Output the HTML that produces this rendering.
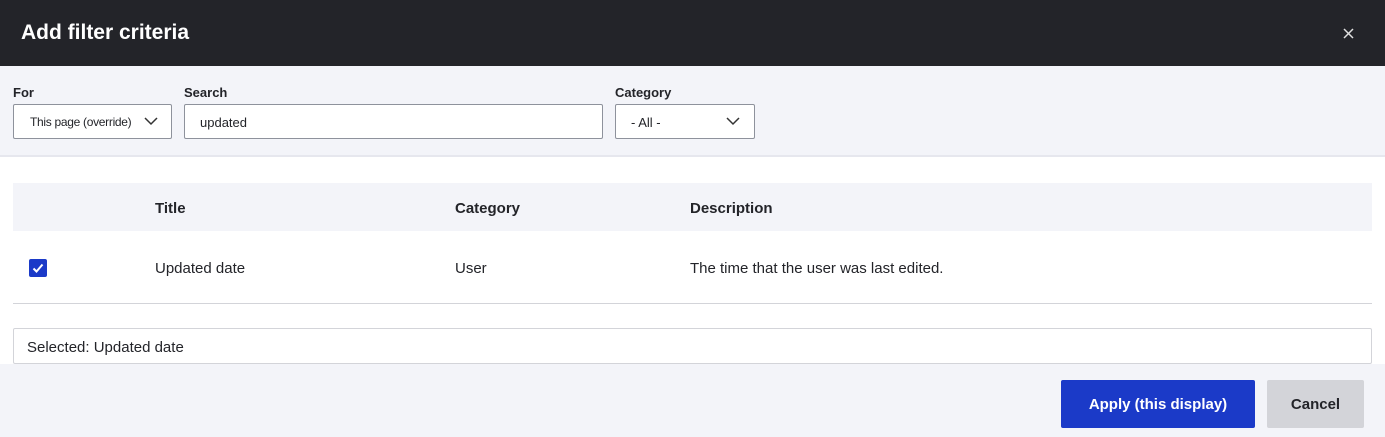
<!DOCTYPE html>
<html><head><style>
*{box-sizing:border-box;margin:0;padding:0}
body{width:1385px;height:437px;overflow:hidden;font-family:"Liberation Sans",sans-serif;color:#232429;background:#fff;position:relative}
.hdr{position:absolute;left:0;top:0;width:1385px;height:66px;background:#232429}
.hdr h1{position:absolute;left:21px;top:21px;font-size:21px;font-weight:bold;color:#fff}
.x{position:absolute;left:1343px;top:28px}
.filt{position:absolute;left:0;top:66px;width:1385px;height:91px;background:#f3f4f9;border-bottom:2px solid #e6e7ee}
.lbl{position:absolute;top:19px;font-size:13px;font-weight:bold}
.inp{position:absolute;top:38px;height:35px;background:#fff;border:1px solid #8e929c;border-radius:2px;font-size:13px;padding:10px 0 0 15px}
.inp svg{position:absolute;top:12px}
.th{position:absolute;left:13px;top:183px;width:1359px;height:48px;background:#f3f4f9;font-size:15px;font-weight:bold}
.th span,.tr span{position:absolute;top:17px}
.tr{position:absolute;left:13px;top:231px;width:1359px;height:73px;border-bottom:1px solid #d3d4d9;font-size:15px}
.tr span{top:29px}
.cb{position:absolute;left:16px;top:28px;width:18px;height:18px;background:#1b3ac8;border-radius:2px}
.sel{position:absolute;left:13px;top:328px;width:1359px;height:36px;border:1px solid #d3d4d9;border-radius:2px;font-size:15px;padding:10px 0 0 13px;background:#fff}
.foot{position:absolute;left:0;top:364px;width:1385px;height:73px;background:#f3f4f9}
.btn{position:absolute;top:16px;height:48px;border-radius:2px;font-size:15px;font-weight:bold;text-align:center;line-height:50px}
</style></head><body>
<div class="hdr"><h1>Add filter criteria</h1>
<svg class="x" width="11" height="11" viewBox="0 0 11 11"><path d="M1 1L10 10M10 1L1 10" stroke="#e0e0e0" stroke-width="1.5"/></svg></div>
<div class="filt">
<div class="lbl" style="left:13px">For</div>
<div class="lbl" style="left:184px">Search</div>
<div class="lbl" style="left:615px">Category</div>
<div class="inp" style="left:13px;width:159px;font-size:12px;padding-left:16px;letter-spacing:-0.3px">This page (override)<svg style="left:130px" width="14" height="9" viewBox="0 0 14 9"><path d="M1 1L7 7L13 1" fill="none" stroke="#333" stroke-width="1.5"/></svg></div>
<div class="inp" style="left:184px;width:419px;padding-left:15px">updated</div>
<div class="inp" style="left:615px;width:140px;padding-left:15px">- All -<svg style="left:110px" width="14" height="9" viewBox="0 0 14 9"><path d="M1 1L7 7L13 1" fill="none" stroke="#333" stroke-width="1.5"/></svg></div>
</div>
<div class="th"><span style="left:142px">Title</span><span style="left:442px">Category</span><span style="left:677px">Description</span></div>
<div class="tr"><div class="cb"><svg width="18" height="18" viewBox="0 0 18 18"><path d="M4.5 9.5L7.5 12.5L13.5 5.5" fill="none" stroke="#fff" stroke-width="2"/></svg></div>
<span style="left:142px">Updated date</span><span style="left:442px">User</span><span style="left:677px">The time that the user was last edited.</span></div>
<div class="sel">Selected: Updated date</div>
<div class="foot">
<div class="btn" style="left:1061px;width:194px;background:#1b3ac8;color:#fff">Apply (this display)</div>
<div class="btn" style="left:1267px;width:97px;background:#d3d4d9;color:#232429">Cancel</div>
</div>
</body></html>
